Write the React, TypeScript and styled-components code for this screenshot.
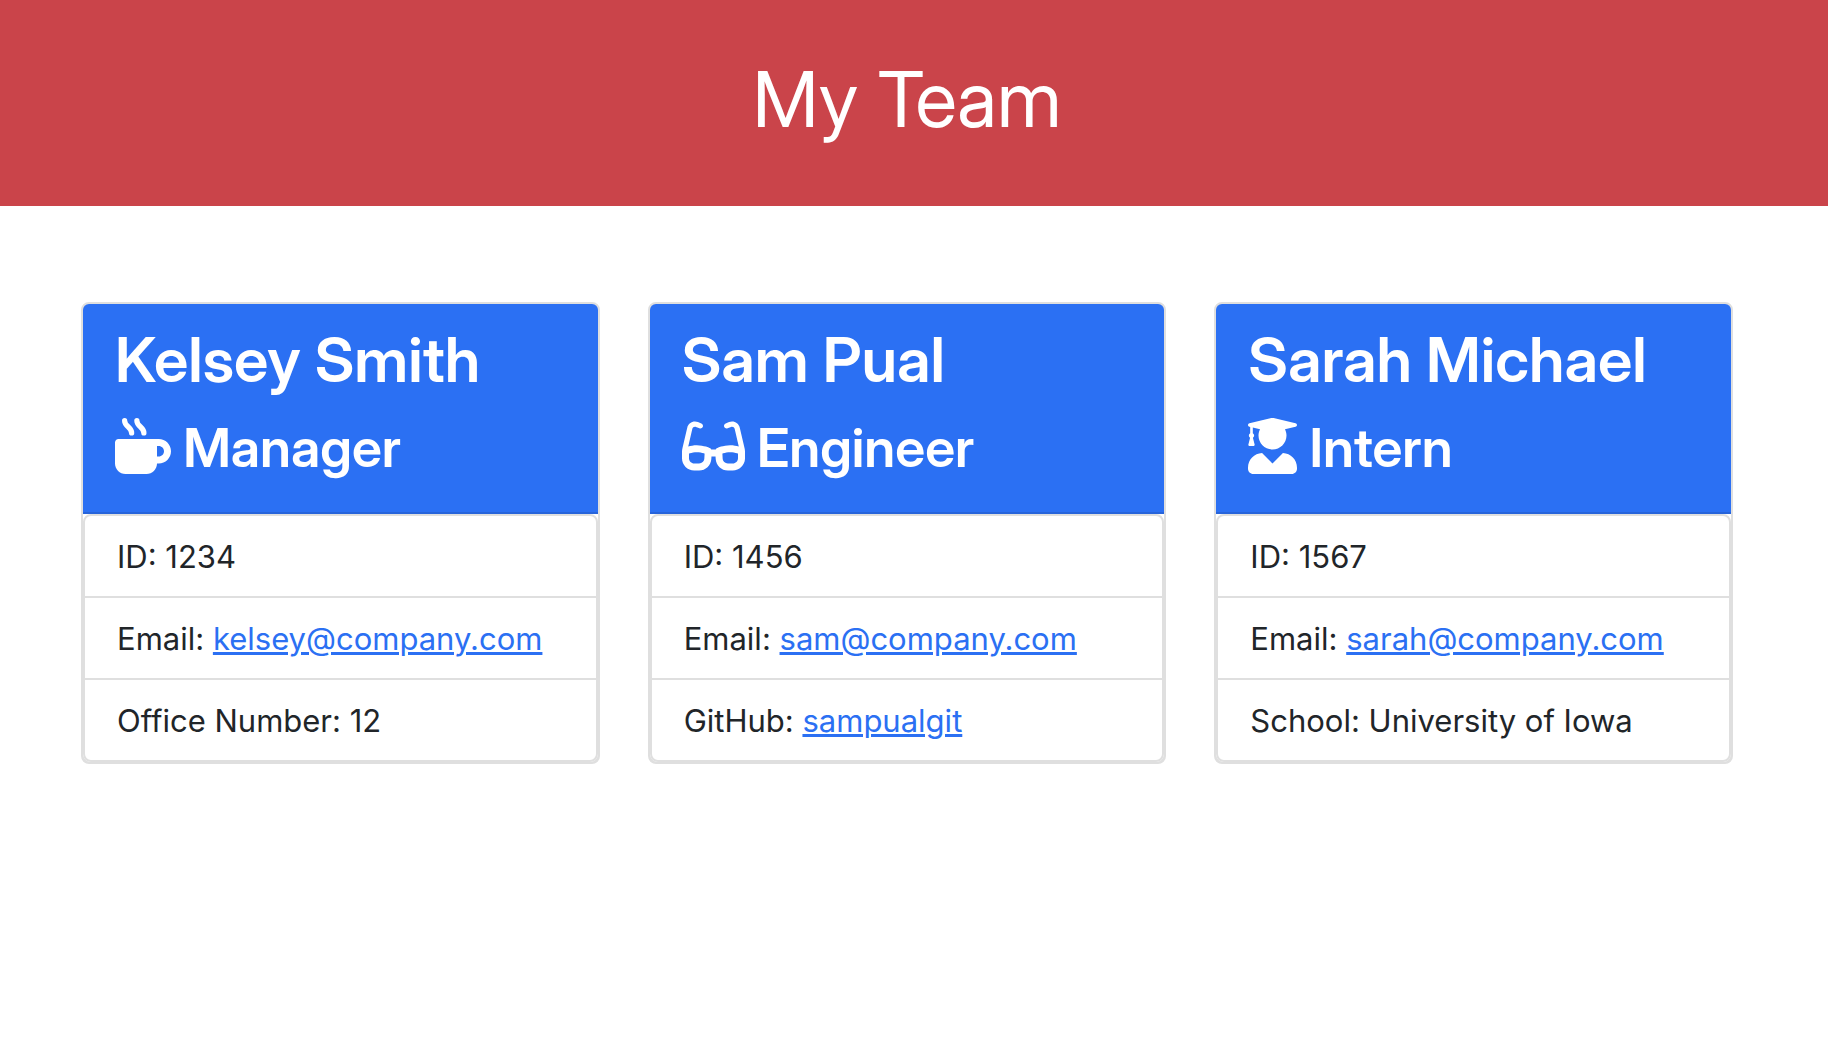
import type { ElementType } from 'react';
import styled, { createGlobalStyle } from 'styled-components';
import { FaUserGraduate } from 'react-icons/fa';
import { FaGlasses } from 'react-icons/fa6';

const displayFont = '"Inter Display", Inter, "Liberation Sans", sans-serif';

const GlobalStyle = createGlobalStyle`
  *, *::before, *::after { box-sizing: border-box; }
  body {
    margin: 0;
    background: #fff;
    color: #212529;
    font-family: Inter, "Liberation Sans", sans-serif;
    font-size: 31px;
    line-height: 48px;
  }
`;

const Banner = styled.header`
  padding: 51px 14px 59px 0;
  background: #ca444a;
  color: #fff;
  text-align: center;
`;

const Title = styled.h1`
  margin: 0;
  font-family: ${displayFont};
  font-size: 77px;
  font-weight: 400;
  line-height: 96px;
`;

const Team = styled.main`
  display: grid;
  grid-template-columns: repeat(3, minmax(0, 1fr));
  gap: 48px;
  padding: 96px 95px 96px 81px;
`;

const Card = styled.article`
  border: 2px solid #dfdfdf;
  border-radius: 8px;
  background: #dfdfdf;
`;

const CardHeader = styled.div`
  padding: 17px 32px 15px;
  border-bottom: 2px solid #2764da;
  border-radius: 6px 6px 0 0;
  background: #2b70f3;
  color: #fff;
`;

const Name = styled.h2`
  margin: 0 0 16px;
  font-family: ${displayFont};
  font-size: 62px;
  font-weight: 600;
  line-height: 77px;
  white-space: nowrap;
`;

const Role = styled.h3`
  margin: 0 0 16px;
  font-family: ${displayFont};
  font-size: 54px;
  font-weight: 600;
  line-height: 67px;
  white-space: nowrap;
`;

const RoleIcon = styled.svg<{ $width: number }>`
  width: ${({ $width }) => $width}px;
  height: 56px;
  vertical-align: -7px;
`;

const Details = styled.ul`
  margin: 0;
  padding: 0;
  list-style: none;
  border: 2px solid #dfdfdf;
  border-radius: 8px;
  background: #fff;
`;

const DetailsFrame = styled.div`
  border-radius: 0 0 8px 8px;
  background: #fff;
`;

const Detail = styled.li`
  padding: 17px 32px 15px;

  & + & { border-top: 2px solid #dfdfdf; }
`;

const Link = styled.a`
  color: #2b70f3;
  text-decoration: underline;
  text-decoration-thickness: 3px;
`;

function MugHot(props: { className?: string }) {
  return (
    <svg viewBox="0 0 512 512" fill="currentColor" {...props}>
      <path d="M400 192H32C14.25 192 0 206.3 0 224v192c0 53 43 96 96 96h192c53 0 96-43 96-96h16c61.75 0 112-50.25 112-112S461.8 192 400 192zM400 352H384V256h16C426.5 256 448 277.5 448 304S426.5 352 400 352z" />
      <path
        d="M88 24C88 76 152 84 152 136M200 24C200 76 264 84 264 136"
        fill="none"
        stroke="currentColor"
        strokeWidth="48"
        strokeLinecap="round"
      />
    </svg>
  );
}

interface Member {
  name: string;
  role: string;
  icon: ElementType;
  iconWidth: number;
  details: { label: string; value: string; href?: string }[];
}

const members: Member[] = [
  {
    name: 'Kelsey Smith',
    role: 'Manager',
    icon: MugHot,
    iconWidth: 56,
    details: [
      { label: 'ID', value: '1234' },
      { label: 'Email', value: 'kelsey@company.com', href: 'mailto:kelsey@company.com' },
      { label: 'Office Number', value: '12' },
    ],
  },
  {
    name: 'Sam Pual',
    role: 'Engineer',
    icon: FaGlasses,
    iconWidth: 63,
    details: [
      { label: 'ID', value: '1456' },
      { label: 'Email', value: 'sam@company.com', href: 'mailto:sam@company.com' },
      { label: 'GitHub', value: 'sampualgit', href: 'https://github.com/sampualgit' },
    ],
  },
  {
    name: 'Sarah Michael',
    role: 'Intern',
    icon: FaUserGraduate,
    iconWidth: 49,
    details: [
      { label: 'ID', value: '1567' },
      { label: 'Email', value: 'sarah@company.com', href: 'mailto:sarah@company.com' },
      { label: 'School', value: 'University of Iowa' },
    ],
  },
];

export default function App() {
  return (
    <>
      <GlobalStyle />
      <Banner>
        <Title>My Team</Title>
      </Banner>
      <Team>
        {members.map(({ name, role, icon, iconWidth, details }) => (
          <Card key={name}>
            <CardHeader>
              <Name>{name}</Name>
              <Role>
                <RoleIcon as={icon} $width={iconWidth} /> {role}
              </Role>
            </CardHeader>
            <DetailsFrame>
              <Details>
                {details.map(({ label, value, href }) => (
                  <Detail key={label}>
                    {label}: {href ? <Link href={href}>{value}</Link> : value}
                  </Detail>
                ))}
              </Details>
            </DetailsFrame>
          </Card>
        ))}
      </Team>
    </>
  );
}
